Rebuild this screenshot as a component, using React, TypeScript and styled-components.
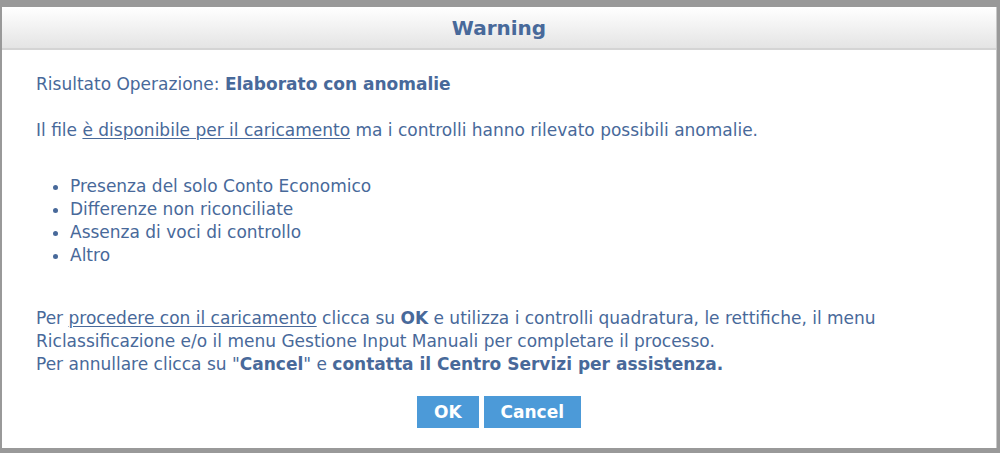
import styled, { createGlobalStyle } from "styled-components";

const GlobalStyle = createGlobalStyle`
  html, body {
    margin: 0;
    padding: 0;
    background: #999999;
  }
`;

const textFont = `"DejaVu Sans", "Liberation Sans", sans-serif`;

export default function App() {
  return (
    <>
      <GlobalStyle />
      <Frame>
        <Dialog>
          <Header>Warning</Header>
          <Body>
            <Line>
              Risultato Operazione: <b>Elaborato con anomalie</b>
            </Line>
            <Line $gap={23}>
              Il file <u>è disponibile per il caricamento</u> ma i controlli hanno rilevato possibili
              anomalie.
            </Line>
            <Bullets>
              <li>Presenza del solo Conto Economico</li>
              <li>Differenze non riconciliate</li>
              <li>Assenza di voci di controllo</li>
              <li>Altro</li>
            </Bullets>
            <Line $gap={40}>
              Per <u>procedere con il caricamento</u> clicca su <b>OK</b> e utilizza i controlli
              quadratura, le rettifiche, il menu
              <br />
              Riclassificazione e/o il menu Gestione Input Manuali per completare il processo.
              <br />
              Per annullare clicca su "<b>Cancel</b>" e <b>contatta il Centro Servizi per assistenza.</b>
            </Line>
            <Actions>
              <Button>OK</Button>
              <Button>Cancel</Button>
            </Actions>
          </Body>
        </Dialog>
      </Frame>
    </>
  );
}

const Frame = styled.div`
  width: 1000px;
  height: 453px;
  box-sizing: border-box;
  padding: 7px 3px 5px 2px;
  background: #999999;
`;

const Dialog = styled.div`
  height: 100%;
  background: #ffffff;
  display: flex;
  flex-direction: column;
  border-right: 1px solid #c8c8c8;
  box-sizing: border-box;
`;

const Header = styled.div`
  height: 41px;
  display: flex;
  align-items: center;
  justify-content: center;
  background: linear-gradient(#ffffff, #e4e4e4);
  border-bottom: 2px solid #d4d4d4;
  font-family: ${textFont};
  font-weight: 700;
  font-size: 20px;
  color: #48699a;
`;

const Body = styled.div`
  padding: 23px 34px 0 34px;
  font-family: ${textFont};
  font-size: 17px;
  line-height: 23px;
  color: #48699a;

  b {
    font-weight: 700;
  }
  u {
    text-decoration-thickness: 1px;
    text-underline-offset: 2px;
  }
`;

const Line = styled.p<{ $gap?: number }>`
  margin: ${(p) => p.$gap ?? 0}px 0 0 0;
`;

const Bullets = styled.ul`
  margin: 33px 0 0 0;
  padding-left: 34px;
`;

const Actions = styled.div`
  display: flex;
  justify-content: center;
  gap: 5px;
  margin-top: 20px;
`;

const Button = styled.button`
  height: 32px;
  padding: 0 17px;
  border: none;
  background: #4c9ad8;
  color: #ffffff;
  font-family: ${textFont};
  font-weight: 700;
  font-size: 17px;
  cursor: pointer;
`;
